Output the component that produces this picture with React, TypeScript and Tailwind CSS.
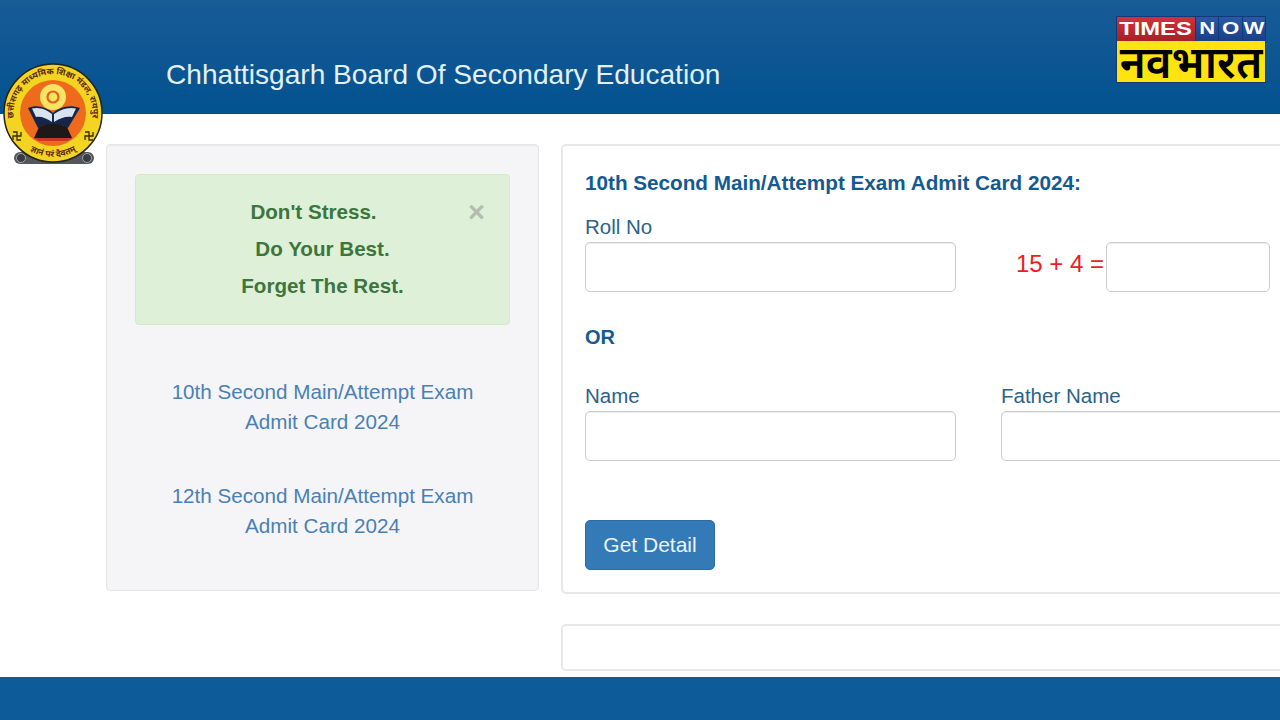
import React from "react"

const font = { fontFamily: '"Liberation Sans", Arial, sans-serif' }

function SealMark({ x, y }: { x: number; y: number }) {
  return (
    <path
      transform={`translate(${x} ${y})`}
      d="M-4 -4 H0 V4 H4 M4 -4 V0 H-4 V4"
      fill="none"
      stroke="#3a2a10"
      strokeWidth="1.3"
    />
  )
}

function Seal() {
  return (
    <svg viewBox="0 0 104 104" className="absolute left-[2px] top-[62px] h-[104px] w-[104px]">
      <defs>
        <path id="sealTop" d="M15 68 A39.5 39.5 0 1 1 87 68" />
        <path id="sealBottom" d="M18 81 A46 46 0 0 0 84 81" />
      </defs>
      {/* base with the two wheels */}
      <rect x="12" y="90" width="80" height="12" rx="6" fill="#55565a" />
      <circle cx="19" cy="96" r="4.5" fill="#3b3c40" stroke="#a0a1a3" />
      <circle cx="85" cy="96" r="4.5" fill="#3b3c40" stroke="#a0a1a3" />
      <circle cx="51" cy="51" r="49" fill="#f3d421" stroke="#23231a" strokeWidth="1.5" />
      <circle cx="51" cy="51" r="33" fill="#ee6b1e" />
      <circle cx="51" cy="35" r="13" fill="#f6e565" />
      <circle cx="51" cy="35" r="5.5" fill="none" stroke="#e8601a" strokeWidth="2.2" />
      {/* open book */}
      <path d="M26 46 C36 42 45 46 51 51 C57 46 66 42 78 46 L66 66 C60 62 55 62 51 66 C47 62 42 62 36 66 Z" fill="#16264a" />
      <path d="M30 46.5 C38 44.5 45 48 50 52 L50 60 C44 56 39 54 34 55 Z" fill="#d8e3ee" />
      <path d="M74 46.5 C66 44.5 58 48 52 52 L52 60 C58 56 64 54 70 55 Z" fill="#d8e3ee" />
      <path d="M37 65 C44 61 58 61 65 65 L70 76 L32 76 Z" fill="#1f1818" />
      <path d="M31 76 H71 L65 79 H37 Z" fill="#c9362a" />
      <text fontSize="8.6" fontWeight="700" fill="#5b2a10" fontFamily='"Noto Sans", sans-serif'>
        <textPath href="#sealTop" startOffset="50%" textAnchor="middle">
          छत्तीसगढ़ माध्यमिक शिक्षा मंडल, रायपुर
        </textPath>
      </text>
      <text fontSize="8.6" fontWeight="700" fill="#5b2a10" fontFamily='"Noto Sans", sans-serif'>
        <textPath href="#sealBottom" startOffset="50%" textAnchor="middle">
          ज्ञानं परं दैवतम्
        </textPath>
      </text>
      <SealMark x={15} y={74} />
      <SealMark x={87} y={74} />
    </svg>
  )
}

function TimesNowLogo() {
  return (
    <div className="flex w-[150px] flex-col border border-[#123a78] bg-[#123a78]">
      <div className="flex h-[24px] gap-[1px]">
        <div className="flex w-[78px] items-center justify-center bg-gradient-to-b from-[#d0323a] to-[#a81f28] text-white">
          <span className="scale-x-[1.32] text-[18px] font-bold leading-none">TIMES</span>
        </div>
        {["N", "O", "W"].map((letter) => (
          <div
            key={letter}
            className="flex flex-1 items-center justify-center bg-gradient-to-b from-[#2b59a6] to-[#1a3f86] text-white"
          >
            <span className="scale-x-[1.3] text-[17px] font-bold leading-none">{letter}</span>
          </div>
        ))}
      </div>
      <div
        className="flex h-[41px] items-center justify-center bg-[#fde30f] text-[44px] font-semibold leading-none text-black"
        style={{ fontFamily: '"Noto Sans", "DejaVu Sans", sans-serif' }}
      >
        नवभारत
      </div>
    </div>
  )
}

function Field({ label, className }: { label: string; className: string }) {
  return (
    <div className={className}>
      <label className="block text-[20.5px] leading-[30px] text-[#2a6289]">{label}</label>
      <input className="block h-[50px] w-full rounded-[5px] border border-[#cccccc] bg-white shadow-[inset_0_1px_1px_rgba(0,0,0,0.075)]" />
    </div>
  )
}

export default function App() {
  return (
    <div className="relative flex h-[720px] w-[1280px] flex-col overflow-hidden bg-white" style={font}>
      {/* Header */}
      <header className="flex h-[114px] shrink-0 items-center justify-between bg-gradient-to-b from-[#175b97] to-[#01528f]">
        <h1 className="ml-[166px] mt-[36px] text-[28.1px] font-normal leading-none text-[#e4f0f8]">
          Chhattisgarh Board Of Secondary Education
        </h1>
        <div className="mb-[16px] mr-[14px]">
          <TimesNowLogo />
        </div>
      </header>
      <Seal />

      {/* Content */}
      <main className="flex flex-1 items-start gap-[22px] pl-[106px] pt-[30px]">
        <aside className="h-[447px] w-[433px] shrink-0 rounded-[4px] border border-[#e6e6e8] bg-[#f5f5f7] px-[28px] pt-[29px] shadow-[inset_0_1px_1px_rgba(0,0,0,0.05)]">
          <div className="relative flex h-[151px] flex-col items-center justify-center rounded-[4px] border border-[#d6e9c6] bg-[#dff0d8] pb-[2px] text-[20.6px] font-bold leading-[37px] text-[#3c763d]">
            <p className="mr-[18px]">Don't Stress.</p>
            <p>Do Your Best.</p>
            <p>Forget The Rest.</p>
            <span className="absolute right-[24px] top-[22px] text-[29px] leading-[30px] text-[#b3bdb0]">×</span>
          </div>
          <div className="mt-[52px] flex flex-col gap-[44px] text-center text-[20.65px] leading-[30px] text-[#4a80b4]">
            <a>
              10th Second Main/Attempt Exam
              <br />
              Admit Card 2024
            </a>
            <a>
              12th Second Main/Attempt Exam
              <br />
              Admit Card 2024
            </a>
          </div>
        </aside>

        <section className="flex w-[760px] shrink-0 flex-col gap-[30px]">
          <div className="h-[450px] rounded-[5px] border-2 border-[#e8e8ea] bg-white pl-[22px] pt-[22px]">
            <h2 className="text-[20.7px] font-bold leading-[30px] text-[#145a92]">
              10th Second Main/Attempt Exam Admit Card 2024:
            </h2>
            <div className="mt-[14px] flex gap-[45px]">
              <Field label="Roll No" className="w-[371px] shrink-0" />
              <div className="mt-[30px] flex h-[50px] flex-1 items-center pl-[15px]">
                <span className="w-[90px] pb-[6px] text-[24px] text-[#ee1c25]">15 + 4 =</span>
                <input className="h-[50px] w-[164px] rounded-[5px] border border-[#cccccc] bg-white shadow-[inset_0_1px_1px_rgba(0,0,0,0.075)]" />
              </div>
            </div>
            <p className="mt-[30px] text-[20px] font-bold leading-[30px] text-[#145a92]">OR</p>
            <div className="mt-[29px] flex gap-[45px]">
              <Field label="Name" className="w-[371px] shrink-0" />
              <Field label="Father Name" className="w-[320px] shrink-0" />
            </div>
            <button className="mt-[59px] h-[50px] w-[130px] rounded-[5px] border border-[#2e6da4] bg-[#337ab7] text-[21px] text-[#eaf5fb]">
              Get Detail
            </button>
          </div>
          <div className="h-[47px] rounded-[5px] border-2 border-[#e8e8ea] bg-white" />
        </section>
      </main>

      <footer className="h-[43px] shrink-0 bg-[#0d5c99]" />
    </div>
  )
}
